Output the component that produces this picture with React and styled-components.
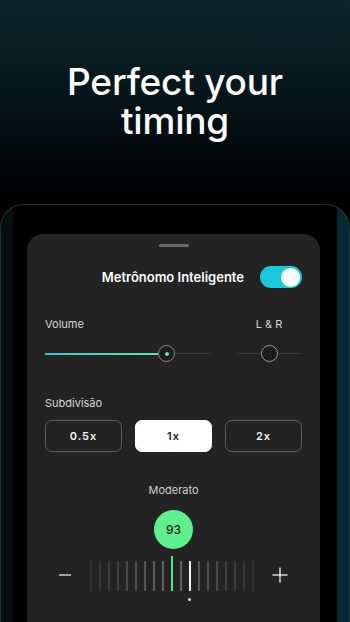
import React from "react";
import styled, { createGlobalStyle } from "styled-components";

const Global = createGlobalStyle`
  html, body { margin: 0; padding: 0; }
  body {
    width: 350px;
    height: 622px;
    overflow: hidden;
    background: linear-gradient(180deg, #0c242a 0px, #06171c 90px, #020709 160px, #000 200px);
    font-family: Inter, "Noto Sans", sans-serif;
    -webkit-font-smoothing: antialiased;
  }
`;

const Page = styled.div`
  width: 350px;
  height: 622px;
  display: flex;
  flex-direction: column;
  overflow: hidden;
`;

const Hero = styled.h1`
  margin: 0;
  padding-top: 62px;
  height: 143px;
  box-sizing: border-box;
  text-align: center;
  color: #fff;
  font-family: Inter, sans-serif;
  font-weight: 500;
  font-size: 37px;
  line-height: 39px;
  letter-spacing: -0.2px;
`;

const Frame = styled.div`
  margin-top: 64px;
  flex: 1;
  border: 1px solid #2a2e30;
  border-bottom: none;
  border-radius: 24px 24px 0 0;
  background: linear-gradient(90deg, #03100f 0, #03100f 12px, #000 12px, #000 335px, #072a30 337px, #072a30 100%);
  padding: 29px 0 0 26px;
  box-sizing: border-box;
`;

const Sheet = styled.div`
  width: 293px;
  height: 420px;
  background: #232323;
  border-radius: 16px 16px 0 0;
  padding: 10px 18px 0;
  box-sizing: border-box;
  display: flex;
  flex-direction: column;
`;

const Handle = styled.div`
  align-self: center;
  width: 30px;
  height: 3px;
  border-radius: 2px;
  background: #6b6b6b;
`;

const TitleRow = styled.div`
  margin-top: 19px;
  display: flex;
  justify-content: flex-end;
  align-items: center;
  gap: 16px;
  height: 22px;
`;

const Title = styled.span`
  color: #fff;
  font-weight: 600;
  font-size: 13px;
`;

const Toggle = styled.div`
  width: 42px;
  height: 22px;
  border-radius: 11px;
  background: #19c8da;
  display: flex;
  align-items: center;
  justify-content: flex-end;
  padding: 0 2px;
  box-sizing: border-box;
`;

const Knob = styled.div`
  width: 19px;
  height: 19px;
  border-radius: 50%;
  background: #fff;
`;

const Label = styled.span`
  color: #d6d6d6;
  font-size: 11px;
  line-height: 14px;
`;

const SliderGrid = styled.div`
  margin-top: 29px;
  display: grid;
  grid-template-columns: 166px 64px;
  column-gap: 26px;
  row-gap: 14px;
`;

const CenterLabel = styled(Label)`
  justify-self: center;
`;

const Track = styled.div`
  position: relative;
  height: 17px;
  display: flex;
  align-items: center;
  &::before {
    content: "";
    position: absolute;
    left: 0;
    right: 0;
    top: 8px;
    height: 1px;
    background: #3a3a3a;
  }
`;

const Fill = styled.div`
  position: relative;
  height: 2px;
  width: ${(p) => p.$w}px;
  background: linear-gradient(90deg, #3ec3cf, #63e2a6);
`;

const Thumb = styled.div`
  position: relative;
  margin-left: ${(p) => p.$ml}px;
  width: 17px;
  height: 17px;
  border-radius: 50%;
  border: 1.5px solid ${(p) => (p.$dot ? "#8a8a8a" : "#9a9a9a")};
  background: #1c1c1c;
  box-sizing: border-box;
  display: flex;
  align-items: center;
  justify-content: center;
  &::after {
    content: "";
    display: ${(p) => (p.$dot ? "block" : "none")};
    width: 4px;
    height: 4px;
    border-radius: 50%;
    background: #62e897;
  }
`;

const SectionLabel = styled(Label)`
  margin-top: 34px;
`;

const Segments = styled.div`
  margin-top: 10px;
  display: grid;
  grid-template-columns: repeat(3, 1fr);
  gap: 13px;
`;

const Segment = styled.button`
  height: 32px;
  border-radius: 7px;
  border: 1px solid ${(p) => (p.$active ? "#fff" : "#5e5e5e")};
  background: ${(p) => (p.$active ? "#fff" : "transparent")};
  color: ${(p) => (p.$active ? "#222" : "#f2f2f2")};
  font-family: Inter, sans-serif;
  font-size: 11px;
  font-weight: 600;
  letter-spacing: 1px;
  padding: 0;
`;

const TempoName = styled(Label)`
  margin-top: 31px;
  align-self: center;
  color: #cfcfcf;
`;

const Bpm = styled.div`
  margin-top: 13px;
  align-self: center;
  width: 39px;
  height: 39px;
  border-radius: 50%;
  background: #5ef08f;
  color: #1b1b1b;
  font-size: 12px;
  font-weight: 500;
  display: flex;
  align-items: center;
  justify-content: center;
`;

const Dial = styled.div`
  margin-top: 7px;
  display: flex;
  align-items: flex-end;
  justify-content: center;
  gap: 18px;
  margin-left: -2px;
`;

const PmButton = styled.div`
  height: 35px;
  display: flex;
  align-items: center;
  padding-top: 3px;
  box-sizing: border-box;
`;

const Ticks = styled.div`
  display: flex;
  align-items: flex-end;
  gap: 7px;
  height: 35px;
`;

const Tick = styled.div`
  position: relative;
  width: 2px;
  height: ${(p) => (p.$kind === "green" ? 35 : 30)}px;
  background: ${(p) =>
    p.$kind === "green" ? "#5ee08f" : p.$kind === "white" ? "#f2f2f2" : "#6a6a6a"};
  opacity: ${(p) => p.$o};
  &::after {
    content: "";
    display: ${(p) => (p.$kind === "white" ? "block" : "none")};
    position: absolute;
    left: -0.5px;
    top: 37px;
    width: 3px;
    height: 3px;
    border-radius: 50%;
    background: #ddd;
  }
`;

const Minus = () => (
  <svg width="14" height="14" viewBox="0 0 14 14">
    <line x1="1" y1="7" x2="13" y2="7" stroke="#dcdcdc" strokeWidth="1.4" />
  </svg>
);

const Plus = () => (
  <svg width="16" height="16" viewBox="0 0 16 16">
    <line x1="0.5" y1="8" x2="15.5" y2="8" stroke="#e6e6e6" strokeWidth="1.4" />
    <line x1="8" y1="0.5" x2="8" y2="15.5" stroke="#e6e6e6" strokeWidth="1.4" />
  </svg>
);

const ticks = Array.from({ length: 19 }, (_, i) => {
  const kind = i === 9 ? "green" : i === 11 ? "white" : "gray";
  const d = Math.abs(i - 9);
  const o = kind === "gray" ? Math.max(0.15, 0.95 - d * 0.085) : 1;
  return { kind, o };
});

export default function App() {
  return (
    <Page>
      <Global />
      <Hero>
        Perfect your
        <br />
        timing
      </Hero>
      <Frame>
        <Sheet>
          <Handle />
          <TitleRow>
            <Title>Metrônomo Inteligente</Title>
            <Toggle>
              <Knob />
            </Toggle>
          </TitleRow>
          <SliderGrid>
            <Label>Volume</Label>
            <CenterLabel>L &amp; R</CenterLabel>
            <Track>
              <Fill $w={113} />
              <Thumb $dot $ml={0} />
            </Track>
            <Track>
              <Thumb $ml={24} />
            </Track>
          </SliderGrid>
          <SectionLabel>Subdivisão</SectionLabel>
          <Segments>
            <Segment>0.5x</Segment>
            <Segment $active>1x</Segment>
            <Segment>2x</Segment>
          </Segments>
          <TempoName>Moderato</TempoName>
          <Bpm>93</Bpm>
          <Dial>
            <PmButton>
              <Minus />
            </PmButton>
            <Ticks>
              {ticks.map((t, i) => (
                <Tick key={i} $kind={t.kind} $o={t.o} />
              ))}
            </Ticks>
            <PmButton>
              <Plus />
            </PmButton>
          </Dial>
        </Sheet>
      </Frame>
    </Page>
  );
}
